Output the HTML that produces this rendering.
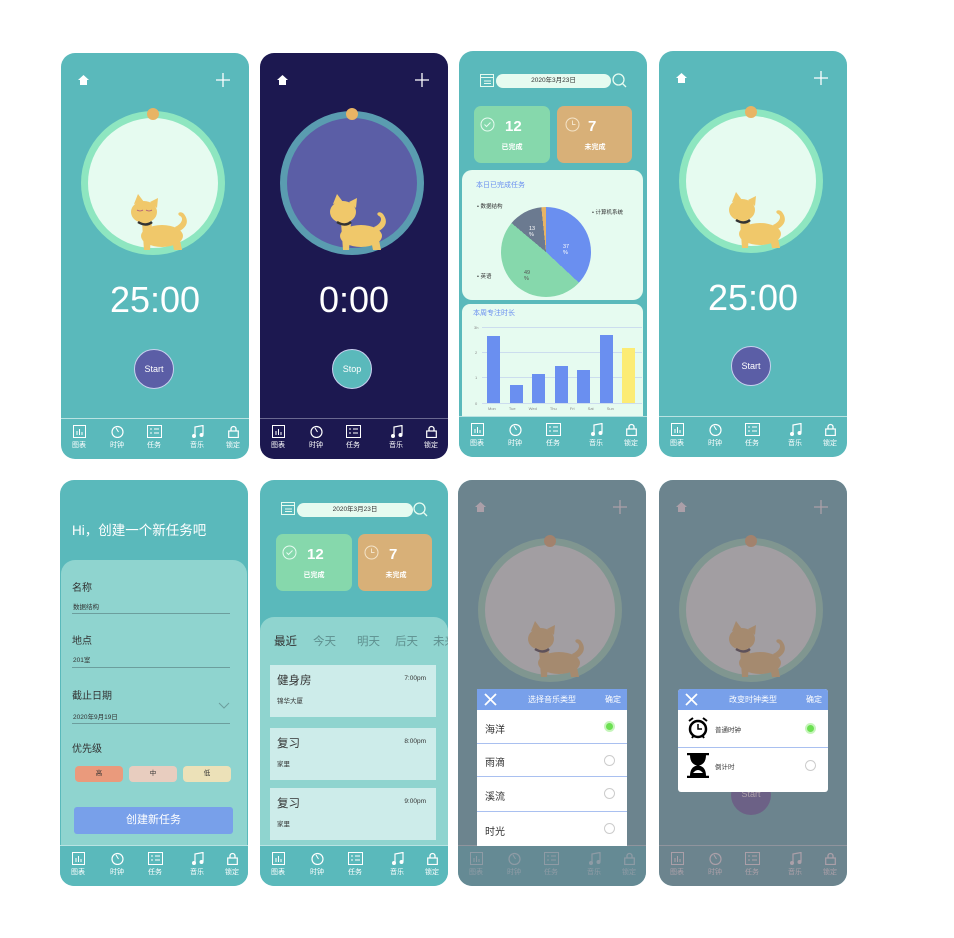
<!DOCTYPE html>
<html><head><meta charset="utf-8">
<style>
*{margin:0;padding:0;box-sizing:border-box}
body{width:954px;height:938px;background:#fff;position:relative;overflow:hidden;font-family:"Liberation Sans","Noto Sans CJK SC",sans-serif}
.ph{position:absolute;width:188px;height:406px;border-radius:14px;overflow:hidden;background:#5ab9bb}
.a{position:absolute}
.nav{position:absolute;left:0;top:365px;width:188px;height:41px;border-top:1px solid #b9e3e2}
.ni{position:absolute;top:6px;width:30px;margin-left:-15px;text-align:center;color:#fff;font-size:7px}
.ni svg{display:block;margin:0 auto 2px}
.ring{position:absolute;border-radius:50%}
.time{position:absolute;left:0;width:188px;text-align:center;color:#fff;font-size:36px;font-weight:300}
.btn{position:absolute;width:40px;height:40px;border-radius:50%;color:#fff;font-size:9px;text-align:center;line-height:38px;border:1px solid #c9d0ef}
.card{position:absolute;width:76px;height:57px;border-radius:7px;color:#fff}
.card .n{position:absolute;left:31px;top:12px;font-size:15px;font-weight:bold}
.card .l{position:absolute;left:0;width:76px;text-align:center;top:36px;font-size:7px;font-weight:bold}
.pill{position:absolute;height:14px;border-radius:7px;background:#e6fbf0;font-size:6.5px;color:#333;text-align:center;line-height:14px}
.item{position:absolute;left:10px;width:166px;height:52px;background:#cdecea}
.item .t{position:absolute;left:7px;top:7px;font-size:11.5px;color:#333}
.item .tm{position:absolute;right:10px;top:10px;font-size:6.5px;color:#333}
.item .s{position:absolute;left:7px;top:30px;font-size:6.5px;color:#333}
.lbl{position:absolute;left:12px;font-size:10px;color:#333}
.val{position:absolute;left:13px;font-size:6.5px;color:#333}
.ln{position:absolute;left:12px;width:158px;border-top:1px solid #6c9e9d}
.ov{position:absolute;left:0;top:0;width:188px;height:406px;background:rgba(132,91,105,.5)}
.dlg{position:absolute;left:19px;width:150px;background:#fff;overflow:hidden}
.dh{height:21px;background:#78a0ea;color:#fff;font-size:8px;line-height:21px;position:relative;text-align:center}
.row{position:relative;border-bottom:1px solid #a9c0f0;font-size:10px;color:#333}
.rad{position:absolute;right:12px;width:11px;height:11px;border-radius:50%;border:1px solid #ccc}
.on{background:#6ce052;border:2px solid #c6f5bb}
</style></head><body>

<!-- P1 -->
<div class="ph" style="left:61px;top:53px">
 <svg class="a" style="left:16px;top:21px" width="13" height="12" viewBox="0 0 13 12"><path d="M6.5 1L1 6h2v5h7V6h2z" fill="#fff"/></svg>
 <svg class="a" style="left:155px;top:20px" width="14" height="14"><path d="M7 0v14M0 7h14" stroke="#fff" stroke-width="1.3"/></svg>
 <div class="ring" style="left:20px;top:58px;width:144px;height:144px;background:#8ee6c0"></div>
 <div class="ring" style="left:27px;top:65px;width:130px;height:130px;background:#e6fbf0"></div>
 <div class="ring" style="left:86px;top:55px;width:12px;height:12px;background:#e8b464"></div>
 <svg class="a" style="left:59px;top:137px" width="70" height="60"><g fill="#f0c86a"><path d="M14 14l4-10 6 8zM30 12l8-4-1 10z"/><ellipse cx="24" cy="22" rx="13" ry="11"/><ellipse cx="42" cy="46" rx="21" ry="11"/><path d="M22 32h10l-2 28h-6zM52 50h8l2 10h-8z"/><path d="M58 42c8-4 12-10 6-18-4-4-8 0-4 2 4 2 2 8-5 11z"/></g><path d="M18 32q8 5 14 0" stroke="#333" stroke-width="2.5" fill="none"/><path d="M17 20q3 2 6 0M26 20q3 2 6 0" stroke="#a57" stroke-width=".8" fill="none"/></svg>
 <div class="time" style="top:226px">25:00</div>
 <div class="btn" style="left:73px;top:296px;background:#5b5ea6">Start</div>
 <div class="nav">
  <div class="ni" style="left:18px"><svg width="13" height="13"><rect x=".5" y=".5" width="12" height="12" fill="none" stroke="#fff"/><path d="M4 10V6M6.5 10V4M9 10V7" stroke="#fff"/></svg>图表</div>
  <div class="ni" style="left:56px"><svg width="13" height="13"><circle cx="6.5" cy="7" r="5.5" fill="none" stroke="#fff" stroke-width="1.2"/><path d="M5 3l2.5 4" stroke="#fff"/></svg>时钟</div>
  <div class="ni" style="left:93px"><svg width="15" height="13"><rect x=".5" y=".5" width="14" height="12" fill="none" stroke="#fff"/><path d="M3 4h2M7 4h5M3 8h2M7 8h5" stroke="#fff"/></svg>任务</div>
  <div class="ni" style="left:136px"><svg width="13" height="13"><path d="M4 11V2l8-1.5v9" stroke="#fff" fill="none" stroke-width="1.2"/><circle cx="3" cy="11" r="2" fill="#fff"/><circle cx="10.5" cy="10" r="2" fill="#fff"/></svg>音乐</div>
  <div class="ni" style="left:172px"><svg width="11" height="13"><path d="M3 6V4a2.5 2.5 0 015 0v2" stroke="#fff" fill="none" stroke-width="1.3"/><rect x=".7" y="6" width="9.6" height="6.5" fill="none" stroke="#fff" stroke-width="1.2"/></svg>锁定</div>
 </div>
</div>

<!-- P2 -->
<div class="ph" style="left:260px;top:53px;background:#1c1850">
 <svg class="a" style="left:16px;top:21px" width="13" height="12" viewBox="0 0 13 12"><path d="M6.5 1L1 6h2v5h7V6h2z" fill="#fff"/></svg>
 <svg class="a" style="left:155px;top:20px" width="14" height="14"><path d="M7 0v14M0 7h14" stroke="#fff" stroke-width="1.3"/></svg>
 <div class="ring" style="left:20px;top:58px;width:144px;height:144px;background:#5a9cb0"></div>
 <div class="ring" style="left:27px;top:65px;width:130px;height:130px;background:#5b5ea6"></div>
 <div class="ring" style="left:86px;top:55px;width:12px;height:12px;background:#e8b464"></div>
 <svg class="a" style="left:59px;top:137px" width="70" height="60"><g fill="#f0c86a"><path d="M14 14l4-10 6 8zM30 12l8-4-1 10z"/><ellipse cx="24" cy="22" rx="13" ry="11"/><ellipse cx="42" cy="46" rx="21" ry="11"/><path d="M22 32h10l-2 28h-6zM52 50h8l2 10h-8z"/><path d="M58 42c8-4 12-10 6-18-4-4-8 0-4 2 4 2 2 8-5 11z"/></g><path d="M18 32q8 5 14 0" stroke="#333" stroke-width="2.5" fill="none"/></svg>
 <div class="time" style="top:226px">0:00</div>
 <div class="btn" style="left:72px;top:296px;background:#5ab9bb">Stop</div>
 <div class="nav" style="border-color:#6a6890">
  <div class="ni" style="left:18px"><svg width="13" height="13"><rect x=".5" y=".5" width="12" height="12" fill="none" stroke="#fff"/><path d="M4 10V6M6.5 10V4M9 10V7" stroke="#fff"/></svg>图表</div>
  <div class="ni" style="left:56px"><svg width="13" height="13"><circle cx="6.5" cy="7" r="5.5" fill="none" stroke="#fff" stroke-width="1.2"/><path d="M5 3l2.5 4" stroke="#fff"/></svg>时钟</div>
  <div class="ni" style="left:93px"><svg width="15" height="13"><rect x=".5" y=".5" width="14" height="12" fill="none" stroke="#fff"/><path d="M3 4h2M7 4h5M3 8h2M7 8h5" stroke="#fff"/></svg>任务</div>
  <div class="ni" style="left:136px"><svg width="13" height="13"><path d="M4 11V2l8-1.5v9" stroke="#fff" fill="none" stroke-width="1.2"/><circle cx="3" cy="11" r="2" fill="#fff"/><circle cx="10.5" cy="10" r="2" fill="#fff"/></svg>音乐</div>
  <div class="ni" style="left:171px"><svg width="11" height="13"><path d="M3 6V4a2.5 2.5 0 015 0v2" stroke="#fff" fill="none" stroke-width="1.3"/><rect x=".7" y="6" width="9.6" height="6.5" fill="none" stroke="#fff" stroke-width="1.2"/></svg>锁定</div>
 </div>
</div>

<!-- P3 -->
<div class="ph" style="left:459px;top:51px">
 <svg class="a" style="left:21px;top:23px" width="14" height="13"><rect x=".5" y=".5" width="13" height="12" fill="none" stroke="#e6fbf0"/><path d="M0 3.5h14M4 7h7M4 9.5h7" stroke="#e6fbf0"/></svg>
 <div class="pill" style="left:37px;top:23px;width:115px">2020年3月23日</div>
 <svg class="a" style="left:153px;top:22px" width="15" height="15"><circle cx="6.5" cy="6.5" r="5.5" fill="none" stroke="#e6fbf0" stroke-width="1.3"/><path d="M10.5 10.5l3.5 3.5" stroke="#e6fbf0" stroke-width="1.3"/></svg>
 <div class="card" style="left:15px;top:55px;background:#86d8ac"><svg class="a" style="left:6px;top:11px" width="15" height="15"><circle cx="7.5" cy="7.5" r="6.5" fill="none" stroke="#e6fbf0"/><path d="M4.5 7.5l2 2 4-4" stroke="#e6fbf0" fill="none"/></svg><div class="n">12</div><div class="l">已完成</div></div>
 <div class="card" style="left:98px;top:55px;width:75px;background:#d8b078"><svg class="a" style="left:8px;top:11px" width="15" height="15"><circle cx="7.5" cy="7.5" r="6.5" fill="none" stroke="#f3e3c8"/><path d="M7.5 3.5v4h3" stroke="#f3e3c8" fill="none"/></svg><div class="n">7</div><div class="l">未完成</div></div>
 <div class="a" style="left:3px;top:119px;width:181px;height:130px;background:#e6fbf0;border-radius:10px">
  <div class="a" style="left:14px;top:10px;font-size:7px;color:#6a8ff0">本日已完成任务</div>
  <div class="a" style="left:39px;top:37px;width:90px;height:90px;border-radius:50%;background:conic-gradient(#6a8ff0 0 133deg,#86d8ac 133deg 310deg,#6b7a90 310deg 354deg,#e8b464 354deg 360deg)"></div>
  <div class="a" style="left:15px;top:32px;font-size:5.5px;color:#333">• 数据结构</div>
  <div class="a" style="left:130px;top:38px;font-size:5.5px;color:#333">• 计算机系统</div>
  <div class="a" style="left:15px;top:102px;font-size:5.5px;color:#333">• 英语</div>
  <div class="a" style="left:67px;top:56px;font-size:5.5px;color:#fff">13<br>%</div>
  <div class="a" style="left:101px;top:74px;font-size:5.5px;color:#fff">37<br>%</div>
  <div class="a" style="left:62px;top:100px;font-size:5.5px;color:#555">49<br>%</div>
 </div>
 <div class="a" style="left:3px;top:253px;width:181px;height:120px;background:#e6fbf0;border-radius:8px">
  <div class="a" style="left:11px;top:4px;font-size:7px;color:#6a8ff0">本周专注时长</div>
  <div class="a" style="left:20px;top:23px;width:160px;border-top:1px solid #cde"></div>
  <div class="a" style="left:20px;top:48px;width:160px;border-top:1px solid #cde"></div>
  <div class="a" style="left:20px;top:73px;width:160px;border-top:1px solid #cde"></div>
  <div class="a" style="left:20px;top:99px;width:160px;border-top:1px solid #cde"></div>
  <div class="a" style="left:25px;top:32px;width:13px;height:67px;background:#6a8ff0"></div>
  <div class="a" style="left:48px;top:81px;width:13px;height:18px;background:#6a8ff0"></div>
  <div class="a" style="left:70px;top:70px;width:13px;height:29px;background:#6a8ff0"></div>
  <div class="a" style="left:93px;top:62px;width:13px;height:37px;background:#6a8ff0"></div>
  <div class="a" style="left:115px;top:66px;width:13px;height:33px;background:#6a8ff0"></div>
  <div class="a" style="left:138px;top:31px;width:13px;height:68px;background:#6a8ff0"></div>
  <div class="a" style="left:160px;top:44px;width:13px;height:55px;background:#fcec74"></div>
  <div class="a" style="left:12px;top:21px;font-size:4px;color:#888">3h</div>
  <div class="a" style="left:13px;top:46px;font-size:4px;color:#888">2</div>
  <div class="a" style="left:13px;top:71px;font-size:4px;color:#888">1</div>
  <div class="a" style="left:13px;top:97px;font-size:4px;color:#888">0</div>
  <div class="a" style="left:26px;top:102px;font-size:4px;color:#888;word-spacing:12px;white-space:nowrap">Mon Tue Wed Thu Fri Sat Sun</div>
 </div>
 <div class="nav" style="background:#5ab9bb">
  <div class="ni" style="left:18px"><svg width="13" height="13"><rect x=".5" y=".5" width="12" height="12" fill="none" stroke="#fff"/><path d="M4 10V6M6.5 10V4M9 10V7" stroke="#fff"/></svg>图表</div>
  <div class="ni" style="left:56px"><svg width="13" height="13"><circle cx="6.5" cy="7" r="5.5" fill="none" stroke="#fff" stroke-width="1.2"/><path d="M5 3l2.5 4" stroke="#fff"/></svg>时钟</div>
  <div class="ni" style="left:94px"><svg width="15" height="13"><rect x=".5" y=".5" width="14" height="12" fill="none" stroke="#fff"/><path d="M3 4h2M7 4h5M3 8h2M7 8h5" stroke="#fff"/></svg>任务</div>
  <div class="ni" style="left:137px"><svg width="13" height="13"><path d="M4 11V2l8-1.5v9" stroke="#fff" fill="none" stroke-width="1.2"/><circle cx="3" cy="11" r="2" fill="#fff"/><circle cx="10.5" cy="10" r="2" fill="#fff"/></svg>音乐</div>
  <div class="ni" style="left:172px"><svg width="11" height="13"><path d="M3 6V4a2.5 2.5 0 015 0v2" stroke="#fff" fill="none" stroke-width="1.3"/><rect x=".7" y="6" width="9.6" height="6.5" fill="none" stroke="#fff" stroke-width="1.2"/></svg>锁定</div>
 </div>
</div>

<!-- P4 -->
<div class="ph" style="left:659px;top:51px">
 <svg class="a" style="left:16px;top:21px" width="13" height="12" viewBox="0 0 13 12"><path d="M6.5 1L1 6h2v5h7V6h2z" fill="#fff"/></svg>
 <svg class="a" style="left:155px;top:20px" width="14" height="14"><path d="M7 0v14M0 7h14" stroke="#fff" stroke-width="1.3"/></svg>
 <div class="ring" style="left:20px;top:58px;width:144px;height:144px;background:#8ee6c0"></div>
 <div class="ring" style="left:27px;top:65px;width:130px;height:130px;background:#e6fbf0"></div>
 <div class="ring" style="left:86px;top:55px;width:12px;height:12px;background:#e8b464"></div>
 <svg class="a" style="left:59px;top:137px" width="70" height="60"><g fill="#f0c86a"><path d="M14 14l4-10 6 8zM30 12l8-4-1 10z"/><ellipse cx="24" cy="22" rx="13" ry="11"/><ellipse cx="42" cy="46" rx="21" ry="11"/><path d="M22 32h10l-2 28h-6zM52 50h8l2 10h-8z"/><path d="M58 42c8-4 12-10 6-18-4-4-8 0-4 2 4 2 2 8-5 11z"/></g><path d="M18 32q8 5 14 0" stroke="#333" stroke-width="2.5" fill="none"/></svg>
 <div class="time" style="top:226px">25:00</div>
 <div class="btn" style="left:72px;top:295px;background:#5b5ea6">Start</div>
 <div class="nav">
  <div class="ni" style="left:18px"><svg width="13" height="13"><rect x=".5" y=".5" width="12" height="12" fill="none" stroke="#fff"/><path d="M4 10V6M6.5 10V4M9 10V7" stroke="#fff"/></svg>图表</div>
  <div class="ni" style="left:56px"><svg width="13" height="13"><circle cx="6.5" cy="7" r="5.5" fill="none" stroke="#fff" stroke-width="1.2"/><path d="M5 3l2.5 4" stroke="#fff"/></svg>时钟</div>
  <div class="ni" style="left:93px"><svg width="15" height="13"><rect x=".5" y=".5" width="14" height="12" fill="none" stroke="#fff"/><path d="M3 4h2M7 4h5M3 8h2M7 8h5" stroke="#fff"/></svg>任务</div>
  <div class="ni" style="left:136px"><svg width="13" height="13"><path d="M4 11V2l8-1.5v9" stroke="#fff" fill="none" stroke-width="1.2"/><circle cx="3" cy="11" r="2" fill="#fff"/><circle cx="10.5" cy="10" r="2" fill="#fff"/></svg>音乐</div>
  <div class="ni" style="left:171px"><svg width="11" height="13"><path d="M3 6V4a2.5 2.5 0 015 0v2" stroke="#fff" fill="none" stroke-width="1.3"/><rect x=".7" y="6" width="9.6" height="6.5" fill="none" stroke="#fff" stroke-width="1.2"/></svg>锁定</div>
 </div>
</div>

<!-- P5 -->
<div class="ph" style="left:60px;top:480px">
 <div class="a" style="left:12px;top:39px;font-size:13.5px;color:#fff">Hi，创建一个新任务吧</div>
 <div class="a" style="left:1px;top:80px;width:186px;height:290px;background:#8fd4cf;border-radius:14px 14px 0 0"></div>
 <div class="lbl" style="top:99px">名称</div>
 <div class="val" style="top:121px">数据结构</div>
 <div class="ln" style="top:133px"></div>
 <div class="lbl" style="top:152px">地点</div>
 <div class="val" style="top:174px">201室</div>
 <div class="ln" style="top:187px"></div>
 <div class="lbl" style="top:207px">截止日期</div>
 <div class="val" style="top:231px">2020年9月19日</div>
 <svg class="a" style="left:158px;top:222px" width="12" height="8"><path d="M1 1l5 5 5-5" stroke="#6c9e9d" fill="none"/></svg>
 <div class="ln" style="top:243px"></div>
 <div class="lbl" style="top:260px">优先级</div>
 <div class="a" style="left:15px;top:286px;width:48px;height:16px;border-radius:4px;background:#ea9a7c;font-size:6.5px;text-align:center;line-height:16px;color:#333">高</div>
 <div class="a" style="left:69px;top:286px;width:48px;height:16px;border-radius:4px;background:#e8cdbf;font-size:6.5px;text-align:center;line-height:16px;color:#333">中</div>
 <div class="a" style="left:123px;top:286px;width:48px;height:16px;border-radius:4px;background:#ece1b8;font-size:6.5px;text-align:center;line-height:16px;color:#333">低</div>
 <div class="a" style="left:14px;top:327px;width:159px;height:27px;border-radius:3px;background:#78a0ea;color:#fff;font-size:11px;text-align:center;line-height:27px">创建新任务</div>
 <div class="nav" style="background:#5ab9bb">
  <div class="ni" style="left:18px"><svg width="13" height="13"><rect x=".5" y=".5" width="12" height="12" fill="none" stroke="#fff"/><path d="M4 10V6M6.5 10V4M9 10V7" stroke="#fff"/></svg>图表</div>
  <div class="ni" style="left:57px"><svg width="13" height="13"><circle cx="6.5" cy="7" r="5.5" fill="none" stroke="#fff" stroke-width="1.2"/><path d="M5 3l2.5 4" stroke="#fff"/></svg>时钟</div>
  <div class="ni" style="left:95px"><svg width="15" height="13"><rect x=".5" y=".5" width="14" height="12" fill="none" stroke="#fff"/><path d="M3 4h2M7 4h5M3 8h2M7 8h5" stroke="#fff"/></svg>任务</div>
  <div class="ni" style="left:137px"><svg width="13" height="13"><path d="M4 11V2l8-1.5v9" stroke="#fff" fill="none" stroke-width="1.2"/><circle cx="3" cy="11" r="2" fill="#fff"/><circle cx="10.5" cy="10" r="2" fill="#fff"/></svg>音乐</div>
  <div class="ni" style="left:172px"><svg width="11" height="13"><path d="M3 6V4a2.5 2.5 0 015 0v2" stroke="#fff" fill="none" stroke-width="1.3"/><rect x=".7" y="6" width="9.6" height="6.5" fill="none" stroke="#fff" stroke-width="1.2"/></svg>锁定</div>
 </div>
</div>

<!-- P6 -->
<div class="ph" style="left:260px;top:480px">
 <svg class="a" style="left:21px;top:22px" width="14" height="13"><rect x=".5" y=".5" width="13" height="12" fill="none" stroke="#e6fbf0"/><path d="M0 3.5h14M4 7h7M4 9.5h7" stroke="#e6fbf0"/></svg>
 <div class="pill" style="left:37px;top:23px;width:116px">2020年3月23日</div>
 <svg class="a" style="left:153px;top:22px" width="15" height="15"><circle cx="6.5" cy="6.5" r="5.5" fill="none" stroke="#e6fbf0" stroke-width="1.3"/><path d="M10.5 10.5l3.5 3.5" stroke="#e6fbf0" stroke-width="1.3"/></svg>
 <div class="card" style="left:16px;top:54px;background:#86d8ac"><svg class="a" style="left:6px;top:11px" width="15" height="15"><circle cx="7.5" cy="7.5" r="6.5" fill="none" stroke="#e6fbf0"/><path d="M4.5 7.5l2 2 4-4" stroke="#e6fbf0" fill="none"/></svg><div class="n">12</div><div class="l">已完成</div></div>
 <div class="card" style="left:98px;top:54px;width:74px;background:#d8b078"><svg class="a" style="left:6px;top:11px" width="15" height="15"><circle cx="7.5" cy="7.5" r="6.5" fill="none" stroke="#f3e3c8"/><path d="M7.5 3.5v4h3" stroke="#f3e3c8" fill="none"/></svg><div class="n">7</div><div class="l">未完成</div></div>
 <div class="a" style="left:0;top:137px;width:188px;height:240px;background:#8fd4cf;border-radius:14px 14px 0 0"></div>
 <div class="a" style="left:14px;top:153px;font-size:11.5px;color:#333;white-space:nowrap">最近<span style="color:#5e8f8e;margin-left:16px">今天</span><span style="color:#5e8f8e;margin-left:21px">明天</span><span style="color:#5e8f8e;margin-left:15px">后天</span><span style="color:#5e8f8e;margin-left:15px">未来</span></div>
 <div class="item" style="top:185px"><div class="t">健身房</div><div class="tm">7:00pm</div><div class="s">锦华大厦</div></div>
 <div class="item" style="top:248px"><div class="t">复习</div><div class="tm">8:00pm</div><div class="s">家里</div></div>
 <div class="item" style="top:308px"><div class="t">复习</div><div class="tm">9:00pm</div><div class="s">家里</div></div>
 <div class="nav" style="background:#5ab9bb">
  <div class="ni" style="left:18px"><svg width="13" height="13"><rect x=".5" y=".5" width="12" height="12" fill="none" stroke="#fff"/><path d="M4 10V6M6.5 10V4M9 10V7" stroke="#fff"/></svg>图表</div>
  <div class="ni" style="left:57px"><svg width="13" height="13"><circle cx="6.5" cy="7" r="5.5" fill="none" stroke="#fff" stroke-width="1.2"/><path d="M5 3l2.5 4" stroke="#fff"/></svg>时钟</div>
  <div class="ni" style="left:95px"><svg width="15" height="13"><rect x=".5" y=".5" width="14" height="12" fill="none" stroke="#fff"/><path d="M3 4h2M7 4h5M3 8h2M7 8h5" stroke="#fff"/></svg>任务</div>
  <div class="ni" style="left:137px"><svg width="13" height="13"><path d="M4 11V2l8-1.5v9" stroke="#fff" fill="none" stroke-width="1.2"/><circle cx="3" cy="11" r="2" fill="#fff"/><circle cx="10.5" cy="10" r="2" fill="#fff"/></svg>音乐</div>
  <div class="ni" style="left:172px"><svg width="11" height="13"><path d="M3 6V4a2.5 2.5 0 015 0v2" stroke="#fff" fill="none" stroke-width="1.3"/><rect x=".7" y="6" width="9.6" height="6.5" fill="none" stroke="#fff" stroke-width="1.2"/></svg>锁定</div>
 </div>
</div>

<!-- P7 -->
<div class="ph" style="left:458px;top:480px">
 <svg class="a" style="left:16px;top:21px" width="13" height="12" viewBox="0 0 13 12"><path d="M6.5 1L1 6h2v5h7V6h2z" fill="#fff"/></svg>
 <svg class="a" style="left:155px;top:20px" width="14" height="14"><path d="M7 0v14M0 7h14" stroke="#fff" stroke-width="1.3"/></svg>
 <div class="ring" style="left:20px;top:58px;width:144px;height:144px;background:#8ee6c0"></div>
 <div class="ring" style="left:27px;top:65px;width:130px;height:130px;background:#e6fbf0"></div>
 <div class="ring" style="left:86px;top:55px;width:12px;height:12px;background:#e8b464"></div>
 <svg class="a" style="left:59px;top:137px" width="70" height="60"><g fill="#f0c86a"><path d="M14 14l4-10 6 8zM30 12l8-4-1 10z"/><ellipse cx="24" cy="22" rx="13" ry="11"/><ellipse cx="42" cy="46" rx="21" ry="11"/><path d="M22 32h10l-2 28h-6zM52 50h8l2 10h-8z"/><path d="M58 42c8-4 12-10 6-18-4-4-8 0-4 2 4 2 2 8-5 11z"/></g><path d="M18 32q8 5 14 0" stroke="#333" stroke-width="2.5" fill="none"/></svg>
 <div class="nav">
  <div class="ni" style="left:18px"><svg width="13" height="13"><rect x=".5" y=".5" width="12" height="12" fill="none" stroke="#fff"/><path d="M4 10V6M6.5 10V4M9 10V7" stroke="#fff"/></svg>图表</div>
  <div class="ni" style="left:56px"><svg width="13" height="13"><circle cx="6.5" cy="7" r="5.5" fill="none" stroke="#fff" stroke-width="1.2"/><path d="M5 3l2.5 4" stroke="#fff"/></svg>时钟</div>
  <div class="ni" style="left:93px"><svg width="15" height="13"><rect x=".5" y=".5" width="14" height="12" fill="none" stroke="#fff"/><path d="M3 4h2M7 4h5M3 8h2M7 8h5" stroke="#fff"/></svg>任务</div>
  <div class="ni" style="left:136px"><svg width="13" height="13"><path d="M4 11V2l8-1.5v9" stroke="#fff" fill="none" stroke-width="1.2"/><circle cx="3" cy="11" r="2" fill="#fff"/><circle cx="10.5" cy="10" r="2" fill="#fff"/></svg>音乐</div>
  <div class="ni" style="left:171px"><svg width="11" height="13"><path d="M3 6V4a2.5 2.5 0 015 0v2" stroke="#fff" fill="none" stroke-width="1.3"/><rect x=".7" y="6" width="9.6" height="6.5" fill="none" stroke="#fff" stroke-width="1.2"/></svg>锁定</div>
 </div>
 <div class="ov" style="background:rgba(120,100,115,.62)"></div>
 <div class="dlg" style="top:209px;height:157px">
  <div class="dh"><svg class="a" style="left:7px;top:4px" width="13" height="13"><path d="M1 1l11 11M12 1L1 12" stroke="#fff" stroke-width="1.8"/></svg>选择音乐类型<span class="a" style="right:6px">确定</span></div>
  <div class="row" style="height:34px"><span class="a" style="left:8px;top:11px">海洋</span><span class="rad on" style="top:11px"></span></div>
  <div class="row" style="height:33px"><span class="a" style="left:8px;top:10px">雨滴</span><span class="rad" style="top:11px"></span></div>
  <div class="row" style="height:35px"><span class="a" style="left:8px;top:11px">溪流</span><span class="rad" style="top:11px"></span></div>
  <div class="row" style="height:34px;border:0"><span class="a" style="left:8px;top:11px">时光</span><span class="rad" style="top:11px"></span></div>
 </div>
 <div class="a" style="left:0;top:366px;width:188px;height:40px;background:rgba(90,150,160,.35)"></div>
</div>

<!-- P8 -->
<div class="ph" style="left:659px;top:480px">
 <svg class="a" style="left:16px;top:21px" width="13" height="12" viewBox="0 0 13 12"><path d="M6.5 1L1 6h2v5h7V6h2z" fill="#fff"/></svg>
 <svg class="a" style="left:155px;top:20px" width="14" height="14"><path d="M7 0v14M0 7h14" stroke="#fff" stroke-width="1.3"/></svg>
 <div class="ring" style="left:20px;top:58px;width:144px;height:144px;background:#8ee6c0"></div>
 <div class="ring" style="left:27px;top:65px;width:130px;height:130px;background:#e6fbf0"></div>
 <div class="ring" style="left:86px;top:55px;width:12px;height:12px;background:#e8b464"></div>
 <svg class="a" style="left:59px;top:137px" width="70" height="60"><g fill="#f0c86a"><path d="M14 14l4-10 6 8zM30 12l8-4-1 10z"/><ellipse cx="24" cy="22" rx="13" ry="11"/><ellipse cx="42" cy="46" rx="21" ry="11"/><path d="M22 32h10l-2 28h-6zM52 50h8l2 10h-8z"/><path d="M58 42c8-4 12-10 6-18-4-4-8 0-4 2 4 2 2 8-5 11z"/></g><path d="M18 32q8 5 14 0" stroke="#333" stroke-width="2.5" fill="none"/></svg>
 <div class="btn" style="left:72px;top:295px;background:#5b5ea6;border:0">Start</div>
 <div class="nav">
  <div class="ni" style="left:18px"><svg width="13" height="13"><rect x=".5" y=".5" width="12" height="12" fill="none" stroke="#fff"/><path d="M4 10V6M6.5 10V4M9 10V7" stroke="#fff"/></svg>图表</div>
  <div class="ni" style="left:56px"><svg width="13" height="13"><circle cx="6.5" cy="7" r="5.5" fill="none" stroke="#fff" stroke-width="1.2"/><path d="M5 3l2.5 4" stroke="#fff"/></svg>时钟</div>
  <div class="ni" style="left:93px"><svg width="15" height="13"><rect x=".5" y=".5" width="14" height="12" fill="none" stroke="#fff"/><path d="M3 4h2M7 4h5M3 8h2M7 8h5" stroke="#fff"/></svg>任务</div>
  <div class="ni" style="left:136px"><svg width="13" height="13"><path d="M4 11V2l8-1.5v9" stroke="#fff" fill="none" stroke-width="1.2"/><circle cx="3" cy="11" r="2" fill="#fff"/><circle cx="10.5" cy="10" r="2" fill="#fff"/></svg>音乐</div>
  <div class="ni" style="left:171px"><svg width="11" height="13"><path d="M3 6V4a2.5 2.5 0 015 0v2" stroke="#fff" fill="none" stroke-width="1.3"/><rect x=".7" y="6" width="9.6" height="6.5" fill="none" stroke="#fff" stroke-width="1.2"/></svg>锁定</div>
 </div>
 <div class="ov" style="background:rgba(120,100,115,.62)"></div>
 <div class="dlg" style="top:209px;height:103px;border-radius:3px">
  <div class="dh"><svg class="a" style="left:7px;top:4px" width="13" height="13"><path d="M1 1l11 11M12 1L1 12" stroke="#fff" stroke-width="1.8"/></svg>改变时钟类型<span class="a" style="right:6px">确定</span></div>
  <div class="row" style="height:38px"><svg class="a" style="left:9px;top:6px" width="22" height="24"><circle cx="11" cy="13" r="8" fill="none" stroke="#000" stroke-width="2.5"/><path d="M11 8v5h4" stroke="#000" stroke-width="1.5" fill="none"/><path d="M2 5l4-3M20 5l-4-3M5 22l2-3M17 22l-2-3" stroke="#000" stroke-width="2"/></svg><span class="a" style="left:37px;top:14px;font-size:6.5px">普通时钟</span><span class="rad on" style="top:13px"></span></div>
  <div class="row" style="height:42px;border:0"><svg class="a" style="left:8px;top:5px" width="24" height="25"><path d="M1 1h22M1 24h22" stroke="#000" stroke-width="2.5"/><path d="M4 2q0 9 7 10.5Q4 14 4 23h16q0-9-7-10.5Q20 11 20 2z" fill="#000"/><path d="M7 20q5-6 10 0z" fill="#fff"/></svg><span class="a" style="left:37px;top:13px;font-size:6.5px">倒计时</span><span class="rad" style="top:12px"></span></div>
 </div>
</div>

</body></html>
